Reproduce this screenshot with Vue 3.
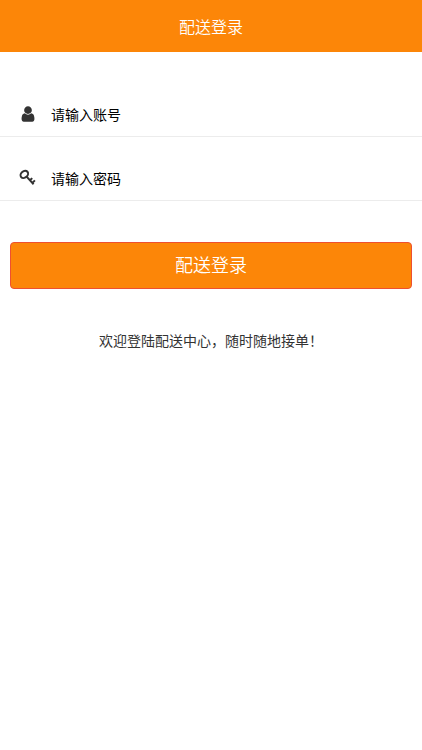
<script setup>
import { ref } from 'vue'
const account = ref('')
const password = ref('')
</script>

<template>
  <main class="page">
    <header class="bar"><h1>配送登录</h1></header>
    <form class="form" @submit.prevent>
      <label class="field">
        <svg class="icon" viewBox="0 0 1280 1792" aria-hidden="true">
          <path d="M1280 1399q0 109-62.500 187t-150.500 78h-854q-88 0-150.500-78t-62.500-187q0-85 8.500-160.500t31.500-152 58.500-131 94-89 134.500-34.500q131 128 313 128t313-128q76 0 134.500 34.500t94 89 58.500 131 31.500 152 8.500 160.500zm-256-887q0 159-112.500 271.500t-271.500 112.500-271.500-112.500-112.500-271.500 112.500-271.500 271.500-112.500 271.500 112.500 112.500 271.500z" />
        </svg>
        <input v-model="account" type="text" placeholder="请输入账号" aria-label="请输入账号" />
      </label>
      <label class="field">
        <svg class="icon key" viewBox="0 0 18 18" aria-hidden="true">
          <ellipse cx="5.300" cy="5.400" rx="4.100" ry="3.200" transform="rotate(-40 5.300 5.400)" />
          <path d="M7.600 7.600 14.600 15.200M11 11.300l2.200-2.200M13.400 13.900l2.500-2.500" />
        </svg>
        <input v-model="password" type="password" placeholder="请输入密码" aria-label="请输入密码" />
      </label>
      <button class="submit" type="submit">配送登录</button>
    </form>
    <p class="welcome">欢迎登陆配送中心，随时随地接单！</p>
  </main>
</template>

<style>
body { margin: 0; background: #fff; }
</style>

<style scoped>
.page { font-family: "Noto Sans CJK SC", sans-serif; color: #333; }
.bar { height: 52px; display: flex; align-items: center; justify-content: center; background: #fc8608; }
h1 { margin: 0; font-size: 16px; line-height: 24px; font-weight: 350; color: #fff; }
.form { padding-top: 21px; }
.field { display: flex; align-items: flex-end; height: 64px; padding: 0 19px 10px; gap: 14px; box-sizing: border-box; border-bottom: 1px solid #ececec; }
.icon { width: 18px; height: 18px; margin-bottom: 3px; fill: #333; flex: none; }
.key { fill: none; stroke: #333; stroke-width: 2; }
input { flex: 1; min-width: 0; height: 24px; padding: 0; border: 0; outline: 0; background: transparent; font: 400 14px/24px "Noto Sans CJK SC", sans-serif; color: #000; }
input::placeholder { color: #000; opacity: 1; }
.submit { display: block; width: calc(100% - 20px); height: 47px; margin: 41px 10px 0; padding: 0 0 4px; border: 1px solid #ee5030; border-radius: 4px; background: #fc8608; color: #fff; font: 350 18px/24px "Noto Sans CJK SC", sans-serif; }
.welcome { margin: 39px 0 0; text-align: center; font-size: 14px; line-height: 24px; }
</style>
